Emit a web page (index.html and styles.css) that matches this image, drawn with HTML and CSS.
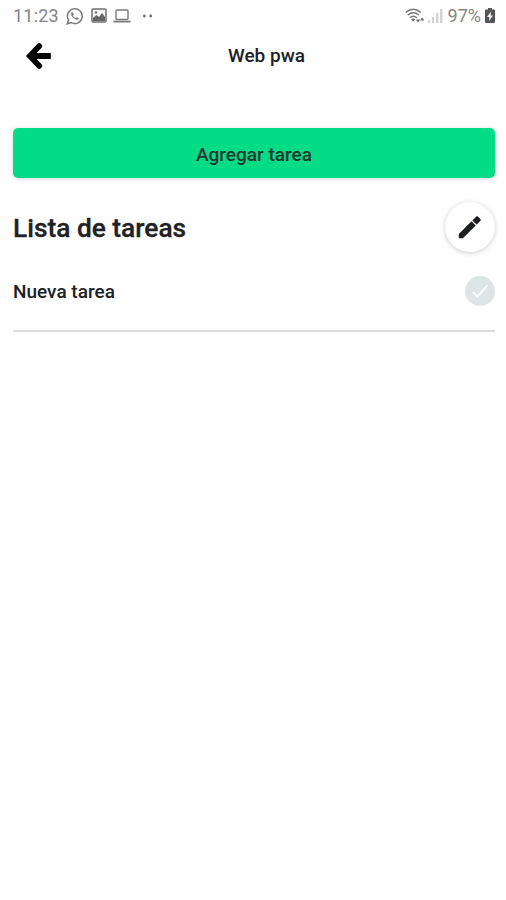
FILE: index.html
```html
<!DOCTYPE html>
<html lang="es">
    <head>
        <meta charset="UTF-8" />
        <meta name="viewport" content="width=device-width, initial-scale=1.0" />
        <title>Web pwa</title>
        <link rel="stylesheet" href="styles.css">
    </head>
    <body>
        <div class="status-bar">
            <span class="time">11:23</span>
            <svg class="whatsapp" width="18" height="18" viewBox="0 0 18 18">
              <path d="M1.3 16.8 2.5 13A7.4 7.4 0 1 1 5.2 15.6Z" fill="none" stroke="#7b7b7b" stroke-width="1.5" />
              <path d="M6.3 4.8C4.2 6.2 5.3 8.8 7.3 10.7S12 13.8 13.2 11.6L11 10.2 9.8 11.2C8.5 10.6 7.7 9.8 7.1 8.4L7.9 7.4Z" fill="#7b7b7b" />
            </svg>
            <svg class="photo" width="16" height="15" viewBox="0 0 16 15">
              <rect x="1" y="1" width="14" height="13" rx="1" fill="#f6f6f6" stroke="#707070" stroke-width="1.5" />
              <path d="M2 10 5.5 7 8 9 11 5 14 9V13H2Z" fill="#646464" />
              <circle cx="5" cy="4.5" r="1.2" fill="#707070" />
            </svg>
            <svg class="laptop" width="18" height="14" viewBox="0 0 18 14">
              <rect x="3" y="1" width="12" height="9.5" rx="1" fill="none" stroke="#7b7b7b" stroke-width="1.4" />
              <path d="M.5 12.6H17.5" stroke="#7b7b7b" stroke-width="1.8" />
            </svg>
            <svg class="dots" width="12" height="4" viewBox="0 0 12 4">
              <circle cx="2.4" cy="2" r="1.4" fill="#707070" />
              <circle cx="8.7" cy="2" r="1.4" fill="#707070" />
            </svg>
            <div class="right">
              <svg class="wifi" width="20" height="16" viewBox="0 0 20 16">
                <g fill="none" stroke="#777" stroke-width="1.5">
                  <path d="M.8 4.3Q8.3-1.6 15.8 4.3" />
                  <path d="M2.8 7Q8.3 2.6 13.8 7" />
                  <path d="M4.8 9.8Q8.3 6.7 11.8 9.8" />
                </g>
                <path d="M6.3 11.3Q8.3 9.6 10.3 11.3L8.3 13.6ZM11 11.6H15L13 14.7ZM15 12.6 17.2 9.4 19.4 12.6Z" fill="#666" />
              </svg>
              <svg class="signal" width="15" height="15" viewBox="0 0 15 15">
                <path d="M0 12H2V15H0ZM4 9H6V15H4ZM8 5H10.5V15H8ZM12 1H14.5V15H12Z" fill="#d5d5d5" />
              </svg>
              <span class="percent">97%</span>
              <svg class="battery" width="10" height="15" viewBox="0 0 10 15">
                <path d="M3 0H7V1.5H9Q10 1.5 10 2.5V14Q10 15 9 15H1Q0 15 0 14V2.5Q0 1.5 1 1.5H3Z" fill="#555" />
                <path d="M6 3.5 2 9H4.5L4 13 8 7.5H5.5Z" fill="#fff" />
              </svg>
            </div>
        </div>

        <div class="head">
            <svg class="back" width="26" height="26" viewBox="0 0 26 26">
              <path d="M13.3 3 3.8 13 13.3 23" fill="none" stroke="#000" stroke-width="5.6" stroke-linecap="round" />
              <path d="M5 13H24.8" stroke="#000" stroke-width="6" />
            </svg>
            <p class="title">Web pwa</p>
        </div>

        <div class="content">
            <button class="add">Agregar tarea</button>
            <div class="list-head">
              <h1>Lista de tareas</h1>
              <button class="edit" aria-label="Editar">
                <svg width="24" height="24" viewBox="0 0 24 24">
                  <path d="M1 19.1V23H4.9L17.4 10.5 13.5 6.6ZM14.7 5.4 18.6 9.3 22.2 5.7Q23 4.9 22.2 4.1L19.9 1.8Q19.1 1 18.3 1.8Z" fill="#1c1d20" stroke="#1c1d20" stroke-width=".5" />
                </svg>
              </button>
            </div>
            <ul class="tasks">
              <li class="task">
                <span>Nueva tarea</span>
                <svg width="30" height="30" viewBox="0 0 30 30">
                  <circle cx="15" cy="15" r="15" fill="#dfe5e6" />
                  <path d="M7.8 15.8 12.5 20.5 22.3 9.5" fill="none" stroke="#fff" stroke-width="1.8" />
                </svg>
              </li>
            </ul>
        </div>
    </body>
</html>
```

FILE: styles.css
```css
* {
  margin: 0;
  padding: 0;
  box-sizing: border-box;
  font-family: Roboto, Arial, sans-serif;
}

body {
  min-height: 100vh;
  background: #fefefe;
  color: #202124;
}

.status-bar {
  display: flex;
  align-items: center;
  height: 31px;
  padding: 0 11px 0 13px;
  color: #858585;
}

.time {
  width: 53px;
  font-size: 18px;
  letter-spacing: 0.2px;
}

.photo {
  margin-left: 7px;
}

.laptop {
  margin-left: 6px;
}

.dots {
  margin-left: 11px;
}

.right {
  display: flex;
  align-items: center;
  margin-left: auto;
}

.signal {
  margin-left: 3px;
}

.percent {
  margin: 0 4px 0 5px;
  font-size: 18px;
}

.head {
  display: grid;
  grid-template-columns: 52px 1fr;
  align-items: center;
  height: 49px;
  padding: 0 25px 0 26px;
}

.title {
  padding-right: 26px;
  text-align: center;
  font-size: 19px;
  font-weight: 500;
}

.content {
  padding: 48px 11px 0 13px;
}

.add {
  display: block;
  width: 100%;
  height: 50px;
  padding-top: 2px;
  border: 0;
  border-radius: 5px;
  background: #02dc87;
  box-shadow: 0 1px 5px rgba(0, 0, 0, 0.15);
  color: #20372d;
  font-size: 19px;
  font-weight: 500;
}

.list-head {
  display: flex;
  align-items: center;
  justify-content: space-between;
  height: 98px;
}

h1 {
  padding-top: 2px;
  font-size: 26.3px;
  font-weight: 500;
  -webkit-text-stroke: 0.3px;
}

.edit {
  display: flex;
  align-items: center;
  justify-content: center;
  width: 50px;
  height: 50px;
  border: 0;
  border-radius: 50%;
  background: #fff;
  box-shadow: 0 1px 5px rgba(0, 0, 0, 0.2);
}

.tasks {
  list-style: none;
}

.task {
  display: flex;
  align-items: flex-start;
  justify-content: space-between;
  height: 56px;
  border-bottom: 2px solid #dbdddd;
  font-size: 19px;
  font-weight: 500;
  line-height: 32px;
}
```
